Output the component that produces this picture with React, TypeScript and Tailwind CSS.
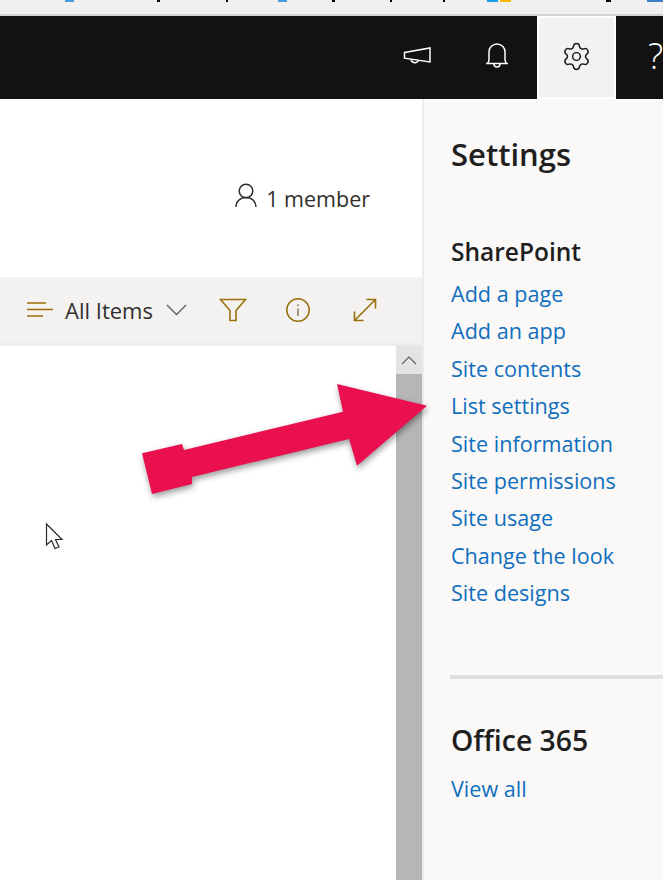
import { Settings } from "lucide-react";

const links = [
  "Add a page",
  "Add an app",
  "Site contents",
  "List settings",
  "Site information",
  "Site permissions",
  "Site usage",
  "Change the look",
  "Site designs",
];

function TopStrip() {
  return (
    <div className="flex h-[16px] items-start border-b-2 border-[#d2d2d2] bg-[#f0f0f0]">
      <span className="ml-[65px] h-[2px] w-[9px] bg-[#4a9be0]" />
      <span className="ml-[83px] h-[2px] w-[3px] bg-black" />
      <span className="ml-[66px] h-[2px] w-[2px] bg-black" />
      <span className="ml-[50px] h-[2px] w-[9px] bg-[#4a9be0]" />
      <span className="ml-[45px] h-[2px] w-[3px] bg-black" />
      <span className="ml-[55px] h-[2px] w-[2px] bg-black" />
      <span className="ml-[51px] h-[2px] w-[2px] bg-black" />
      <span className="ml-[42px] h-[2px] w-[11px] bg-[#1ba1e2]" />
      <span className="ml-[2px] h-[2px] w-[11px] bg-[#ffb900]" />
      <span className="ml-[95px] h-[2px] w-[5px] bg-black" />
      <span className="ml-[36px] h-[2px] w-[16px] bg-[#3f7fc4]" />
    </div>
  );
}

function Header() {
  return (
    <div className="flex h-[83px] bg-[#121212] pl-[379px]">
      <div className="flex w-[79px] shrink-0 items-center justify-center pr-[3px] pb-[3px]">
        <svg width="28" height="20" viewBox="0 0 28 20" fill="none" stroke="white" strokeWidth="1.5">
          <path d="M1.5 6.5 27 2v14L1.5 12.2Z" />
          <path d="M8 13.5a4 4 0 0 0 7.5 1" />
        </svg>
      </div>
      <div className="flex w-[79px] shrink-0 items-center justify-center pr-[1px] pb-[3px]">
        <svg width="22" height="28" viewBox="0 0 22 28" fill="none" stroke="white" strokeWidth="1.5">
          <path d="M1 21.5h20c-1.600-1-2-2-2-4V10a8 8 0 0 0-16 0v7.500c0 2-.4 3-2 4Z" />
          <path d="M8 22a3 3 0 0 0 6 0" />
        </svg>
      </div>
      <div className="flex w-[79px] shrink-0 items-center justify-center border-2 border-white bg-[#f3f2f1] pb-[3px]">
        <Settings size={31} strokeWidth={1.15} className="text-[#1c1c1c]" />
      </div>
      <div className="flex w-[79px] shrink-0 items-center justify-center pb-[3px] text-[36px] leading-none font-light text-white">
        ?
      </div>
    </div>
  );
}

function Toolbar() {
  return (
    <div className="flex h-[66px] items-center bg-[#f3f2f1] text-[#32302e]">
      <svg className="ml-[27px]" width="26" height="18" viewBox="0 0 26 18" fill="none" stroke="#986f0b" strokeWidth="1.6">
        <path d="M0 2h19M0 8.500h26M0 15h16" />
      </svg>
      <span className="ml-[12px] text-[22px] leading-none">All Items</span>
      <svg className="ml-[13px]" width="21" height="12" viewBox="0 0 21 12" fill="none" stroke="#5f5e5c" strokeWidth="1.3">
        <path d="M1 1l9.500 9.500L20 1" />
      </svg>
      <svg className="ml-[32px]" width="28" height="24" viewBox="0 0 28 24" fill="none" stroke="#986f0b" strokeWidth="1.6">
        <path d="M1.500 1.500h25L17 12.500v10h-6v-10Z" />
      </svg>
      <svg className="ml-[38px]" width="26" height="26" viewBox="0 0 26 26" fill="none" stroke="#986f0b" strokeWidth="1.5">
        <circle cx="13" cy="13" r="11.200" />
        <path d="M13 11.500v7.500" strokeWidth="1.200" stroke="#6b5a2c" />
        <path d="M13 7.500v1.500" strokeWidth="1.400" stroke="#6b5a2c" />
      </svg>
      <svg className="ml-[42px]" width="24" height="24" viewBox="0 0 24 24" fill="none" stroke="#986f0b" strokeWidth="1.6">
        <path d="M1.500 22.500 22.500 1.500M13.500 1.500h9v9M1.500 13.500v9h9" />
      </svg>
    </div>
  );
}

function LeftPane() {
  return (
    <div className="flex w-[422px] shrink-0 flex-col bg-white">
      <div className="flex h-[178px] items-start justify-end pt-[84px] pr-[52px] text-[#32302e]">
        <svg className="mr-[9px]" width="22" height="25" viewBox="0 0 22 25" fill="none" stroke="#2b2b2b" strokeWidth="1.5">
          <circle cx="11" cy="8" r="6.800" />
          <path d="M1 24c0-5.500 4-9.500 10-9.500s10 4 10 9.500" />
        </svg>
        <span className="mt-[1px] text-[21.5px] leading-[30px]">1 member</span>
      </div>
      <Toolbar />
      <div className="h-[3px] bg-[#ececec]" />
      <div className="flex min-h-0 flex-1 justify-end">
        <div className="flex w-[26px] flex-col">
          <div className="flex h-[28px] items-center justify-center bg-[#e4e4e4]">
            <svg width="16" height="9" viewBox="0 0 16 9" fill="none" stroke="#606060" strokeWidth="1.200">
              <path d="M1 8l7-7 7 7" />
            </svg>
          </div>
          <div className="flex-1 bg-[#b6b6b6]" />
        </div>
      </div>
    </div>
  );
}

function SettingsPanel() {
  return (
    <div className="flex-1 border-l-2 border-[#ececec] bg-[#faf9f8] pl-[27px] text-[#201f1e]">
      <h1 className="mt-[33px] text-[31px] leading-[44px] font-semibold">Settings</h1>
      <h2 className="mt-[59px] text-[24.5px] leading-[34px] font-semibold">SharePoint</h2>
      <ul className="mt-[6px] text-[21.6px] leading-[37.4px] text-[#106ebe]">
        {links.map((link) => (
          <li key={link} className="whitespace-nowrap">
            {link}
          </li>
        ))}
      </ul>
      <div className="mt-[63px] -ml-[1px] h-[4px] bg-[#e1dfdd]" />
      <h2 className="mt-[41px] text-[28.4px] leading-[40px] font-semibold">Office 365</h2>
      <div className="mt-[10px] text-[21.6px] leading-[37px] text-[#106ebe]">View all</div>
    </div>
  );
}

export default function App() {
  return (
    <div className="relative h-[880px] w-[663px] overflow-hidden bg-white font-['Open_Sans','Noto_Sans',sans-serif]">
      <TopStrip />
      <Header />
      <div className="flex h-[781px]">
        <LeftPane />
        <SettingsPanel />
      </div>

      {/* annotation arrow drawn over the screenshot */}
      <svg className="absolute top-[380px] left-[138px] drop-shadow-[1px_3px_3px_rgba(0,0,0,0.4)]" width="292" height="118" viewBox="138 380 292 118">
        <path
          d="M142 453.300 182 444 184 450 343 411.700 337 384 427 405.700 357 465.700 349 439 192 477 192 484 152 494Z"
          fill="#ea1050"
        />
      </svg>

      {/* mouse pointer */}
      <svg className="absolute top-[522px] left-[45px]" width="20" height="30" viewBox="0 0 20 30" fill="white" stroke="#2a2a2a" strokeWidth="1.200">
        <path d="M1.500 2v21l5-4.500 3.500 8 4-1.500-3.500-7.500h6.500Z" />
      </svg>
    </div>
  );
}
